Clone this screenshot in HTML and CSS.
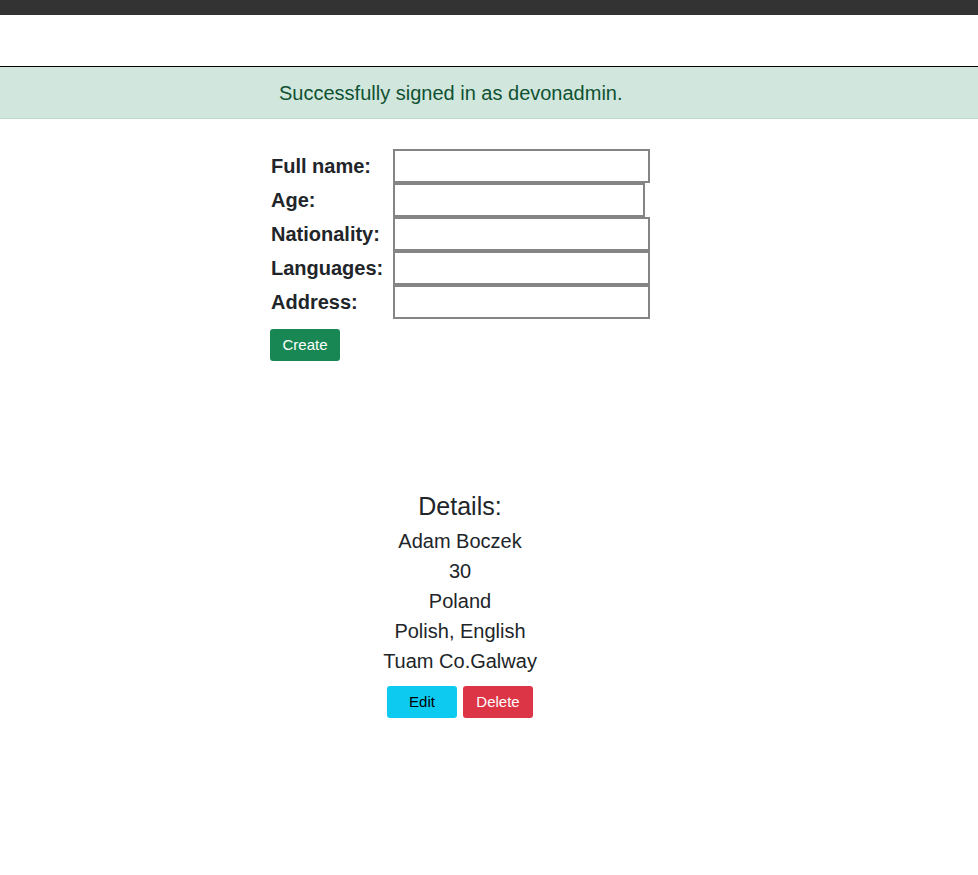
FILE: index.html
```html
<!DOCTYPE html>
<html>
<head>
<meta charset="utf-8">
<link rel="stylesheet" href="styles.css">
</head>
<body>
<div class="topbar"></div>
<div class="navspace"></div>
<div class="alert">Successfully signed in as devonadmin.</div>
<main class="main">
  <form class="form">
    <div class="row"><label class="lbl">Full name:</label><input class="inp" type="text"></div>
    <div class="row"><label class="lbl">Age:</label><input class="inp inp-age" type="text"></div>
    <div class="row"><label class="lbl">Nationality:</label><input class="inp" type="text"></div>
    <div class="row"><label class="lbl">Languages:</label><input class="inp" type="text"></div>
    <div class="row"><label class="lbl">Address:</label><input class="inp" type="text"></div>
    <button type="button" class="btn btn-create">Create</button>
  </form>
  <section class="details">
    <h4 class="details-title">Details:</h4>
    <div class="line">Adam Boczek</div>
    <div class="line">30</div>
    <div class="line">Poland</div>
    <div class="line">Polish, English</div>
    <div class="line">Tuam Co.Galway</div>
    <div class="actions">
      <button type="button" class="btn btn-edit">Edit</button>
      <button type="button" class="btn btn-delete">Delete</button>
    </div>
  </section>
</main>
</body>
</html>
```
FILE: styles.css
```css
html, body {
  margin: 0;
  padding: 0;
  background: #fff;
  font-family: "Liberation Sans", Arial, sans-serif;
  color: #212529;
}
.topbar {
  height: 15px;
  background: #333333;
}
.navspace {
  height: 51px;
}
.alert {
  border-top: 1px solid #000;
  border-bottom: 1px solid #badbcc;
  background: #d1e7dd;
  color: #0f5132;
  height: 50px;
  padding-top: 1px;
  line-height: 51px;
  font-size: 20px;
  padding-left: 279px;
}
.main {
  width: 380px;
  margin-left: 270px;
}
.form {
  margin: 30px 0 0 0;
  display: flex;
  flex-direction: column;
}
.row {
  display: flex;
  align-items: center;
  height: 34px;
}
.lbl {
  width: 123px;
  font-weight: bold;
  font-size: 20px;
  padding-left: 1px;
  box-sizing: border-box;
}
.inp {
  width: 257px;
  height: 34px;
  box-sizing: border-box;
  border: 2px solid #858585;
  margin: 0;
  padding: 2px 4px;
  font-size: 16px;
  background: #fff;
  outline: none;
}
.inp-age {
  width: 252px;
}
.btn {
  height: 32px;
  width: 70px;
  border: none;
  border-radius: 3px;
  font-family: "Liberation Sans", Arial, sans-serif;
  font-size: 15px;
  padding: 0 0 1px 0;
  cursor: pointer;
}
.btn-create {
  margin-top: 10px;
  background: #198754;
  color: #fff;
  align-self: flex-start;
}
.details {
  margin-top: 129px;
  text-align: center;
}
.details-title {
  margin: 0 0 2px 0;
  font-size: 25px;
  font-weight: normal;
  line-height: 33px;
  padding-bottom: 1px;
}
.line {
  font-size: 20px;
  line-height: 30px;
}
.actions {
  margin-top: 10px;
  display: flex;
  justify-content: center;
  gap: 6px;
}
.btn-edit {
  background: #0dcaf0;
  color: #000;
}
.btn-delete {
  background: #dc3545;
  color: #fff;
}
```
